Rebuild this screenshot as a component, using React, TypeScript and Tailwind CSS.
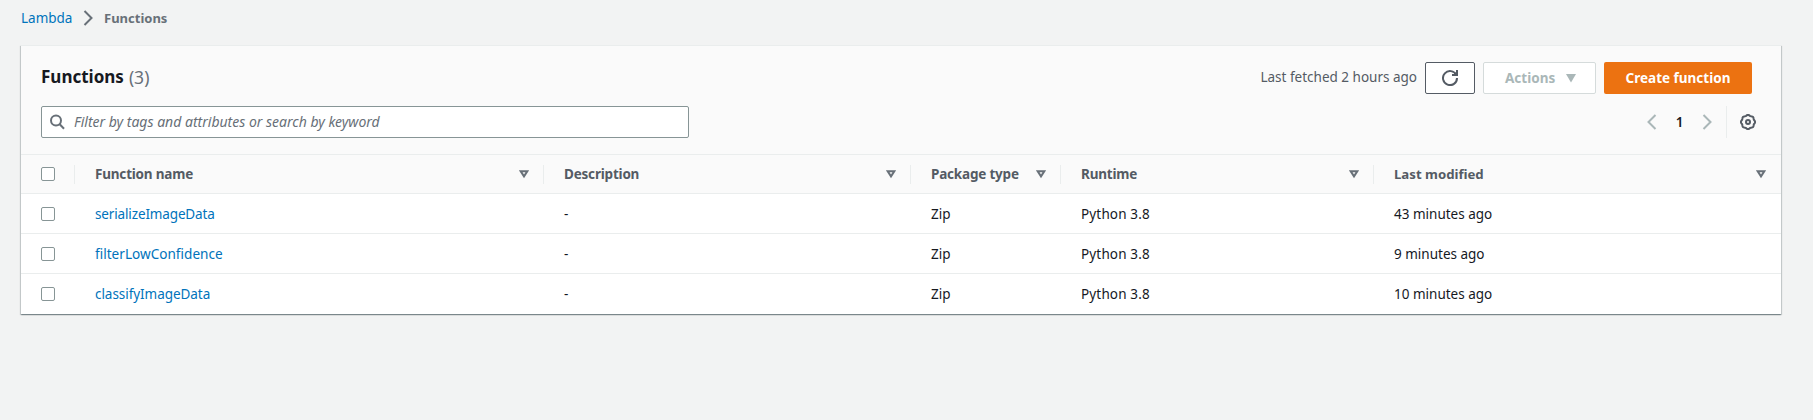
import type { ReactNode } from "react";
import clsx from "clsx";

const columns = [
  { label: "Function name", width: "w-[469px]", spacing: "tracking-[-0.2px]" },
  { label: "Description", width: "w-[367px]", spacing: "tracking-[-0.2px]" },
  { label: "Package type", width: "w-[150px]", spacing: "tracking-[-0.2px]" },
  { label: "Runtime", width: "w-[313px]", spacing: "tracking-[-0.2px]" },
  { label: "Last modified", width: "w-[407px]", spacing: "text-[13.2px]" },
];

const functions = [
  { name: "serializeImageData", spacing: "tracking-[-0.14px]", modified: "43 minutes ago" },
  { name: "filterLowConfidence", spacing: "text-[13.6px]", modified: "9 minutes ago" },
  { name: "classifyImageData", spacing: "tracking-[-0.05px]", modified: "10 minutes ago" },
];

function Chevron({ left = false, className }: { left?: boolean; className: string }) {
  return (
    <svg viewBox="0 0 16 16" className={clsx("size-4 fill-none stroke-2", className)}>
      <path d={left ? "M11.5 1 4.5 8l7 7" : "m4.5 1 7 7-7 7"} />
    </svg>
  );
}

function SortIcon() {
  return (
    <svg viewBox="0 0 10 9" className="h-[9px] w-[10px] fill-none stroke-[#687078] stroke-2">
      <path d="M1.7 1.2h6.6L5 6.4z" />
    </svg>
  );
}

function Checkbox() {
  return <span className="block size-3.5 rounded-xs border border-[#879596] bg-white" />;
}

function Gear() {
  const points = Array.from({ length: 64 }, (_, i) => {
    const a = (i / 64) * Math.PI * 2;
    const r = 6.7 + 0.4 * Math.cos(8 * a);
    return `${(8 + r * Math.cos(a)).toFixed(2)},${(8 + r * Math.sin(a)).toFixed(2)}`;
  }).join(" ");
  return (
    <svg viewBox="0 0 16 16" className="size-4 fill-none stroke-[#545b64] stroke-2">
      <polygon points={points} />
      <circle cx="8" cy="8" r="2" />
    </svg>
  );
}

function Cell({ width, children }: { width: string; children: ReactNode }) {
  return <div className={clsx("pl-5", width)}>{children}</div>;
}

export default function App() {
  return (
    <div className="h-[420px] bg-[#f2f3f3] font-['Noto_Sans',sans-serif] text-[13.5px] leading-5 text-[#16191f]">
      <nav className="flex h-[45px] items-start pt-2 pl-[21px]">
        <a className="w-[59px] text-[13.5px] text-[#0073bb]">Lambda</a>
        <Chevron className="mt-[2px] stroke-[#687078]" />
        <span className="ml-[8px] text-[13px] font-bold text-[#687078]">Functions</span>
      </nav>

      <section className="ml-[21px] h-[269px] w-[1760px] border-t border-[#eaeded] bg-white shadow-[0_1px_1px_0_rgba(0,28,36,0.3),1px_1px_1px_0_rgba(0,28,36,0.15),-1px_1px_1px_0_rgba(0,28,36,0.15)]">
        <header className="h-[109px] border-b border-[#eaeded] bg-[#fafafa] pt-4 pl-5">
          <div className="flex h-8 items-center">
            <h1 className="flex gap-[5px] pb-[3px] text-[17px] leading-7">
              <span className="font-bold">Functions</span>
              <span className="text-[17.5px] text-[#687078]">(3)</span>
            </h1>
            <span className="mr-2 ml-auto pb-0.5 text-[#545b64]">Last fetched 2 hours ago</span>
            <button className="flex h-8 w-[50px] items-center justify-center rounded-xs border border-[#545b64] bg-white">
              <svg viewBox="0 0 16 16" className="size-4 fill-none stroke-[#545b64] stroke-2">
                <path d="M10 5h5V0" />
                <path d="M12 4.5 14.5 2v2.5z" className="stroke-1" />
                <path d="M15 8a7 7 0 1 1-.7-3" />
              </svg>
            </button>
            <button className="ml-2 flex h-8 w-[113px] items-center rounded-xs border border-[#d5dbdb] bg-white pl-[21px] font-bold text-[#aab7b8]">
              <span className="w-[61px] text-left">Actions</span>
              <svg viewBox="0 0 10 9" className="h-[9px] w-[10px] fill-[#aab7b8]">
                <path d="M0 0h10L5 8.5z" />
              </svg>
            </button>
            <button className="mr-[29px] ml-2 h-8 w-[148px] rounded-xs bg-[#ec7211] font-bold text-white">
              Create function
            </button>
          </div>
          <div className="mt-3 flex h-8 items-center">
            <div className="flex h-8 w-[648px] items-center rounded-xs border border-[#879596] bg-white pl-[7px]">
              <svg viewBox="0 0 16 16" className="size-4 fill-none stroke-[#687078] stroke-2">
                <circle cx="7" cy="6.5" r="5" />
                <path d="m10.5 10 4.5 4.8" />
              </svg>
              <span className="ml-[9px] text-[14px] text-[#687078] italic">
                Filter by tags and attributes or search by keyword
              </span>
            </div>
            <div className="mr-[25px] ml-auto flex h-8 items-center">
              <Chevron left className="stroke-[#aab7b8]" />
              <span className="mx-[11px] w-[17px] text-center font-semibold">1</span>
              <Chevron className="stroke-[#aab7b8]" />
              <span className="mr-[13px] ml-[11px] h-8 w-px bg-[#eaeded]" />
              <Gear />
            </div>
          </div>
        </header>

        <div className="flex h-[39px] items-center border-b border-[#eaeded] bg-[#fafafa]">
          <div className="flex h-[19px] w-[54px] items-center border-r border-[#eaeded] pl-5">
            <Checkbox />
          </div>
          {columns.map((column, index) => (
            <div
              key={column.label}
              className={clsx(
                "flex h-[19px] items-center justify-between pl-5",
                index < columns.length - 1 ? "border-r border-[#eaeded] pr-[14px]" : "pr-[15px]",
                column.width,
              )}
            >
              <span className={clsx("font-bold text-[#545b64]", column.spacing)}>{column.label}</span>
              <SortIcon />
            </div>
          ))}
        </div>

        {functions.map((fn, index) => (
          <div
            key={fn.name}
            className={clsx("flex h-10 items-center", index < functions.length - 1 && "border-b border-[#eaeded]")}
          >
            <div className="w-[54px] pl-5">
              <Checkbox />
            </div>
            <Cell width="w-[469px]">
              <a className={clsx("text-[#0073bb]", fn.spacing)}>{fn.name}</a>
            </Cell>
            <Cell width="w-[367px]">-</Cell>
            <Cell width="w-[150px]">Zip</Cell>
            <Cell width="w-[313px]">
              <span className="tracking-[0.15px]">Python 3.8</span>
            </Cell>
            <Cell width="w-[407px]">{fn.modified}</Cell>
          </div>
        ))}
      </section>
    </div>
  );
}
